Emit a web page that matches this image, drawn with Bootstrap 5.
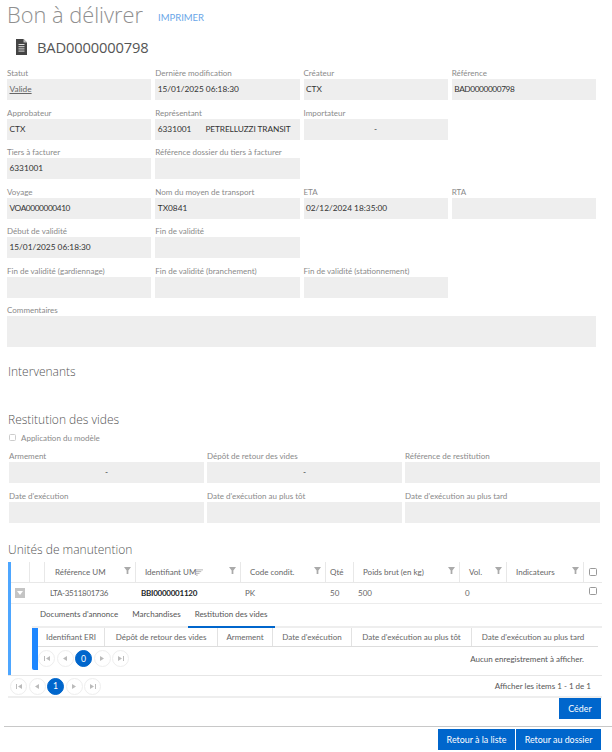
<!DOCTYPE html>
<html lang="fr">

<head>
  <meta charset="UTF-8">
  <meta name="viewport" content="width=device-width, initial-scale=1.0">
  <title>Bon à délivrer</title>
  <link href="https://cdn.jsdelivr.net/npm/bootstrap@5.3.5/dist/css/bootstrap.min.css" rel="stylesheet">
  <style>
    html, body { height: 752px; overflow: hidden; }
    body { font-family: Lato, "Liberation Sans", sans-serif; font-size: 8px; color: #444; background: #fff; }
    .page-head { height: 30px; padding-left: 7px; }
    .page-title { font-family: "Open Sans", sans-serif; font-size: 21.8px; font-weight: 300; color: #8f8f8f; line-height: 30px; margin: 0; width: 151px; }
    .print-link { font-size: 9.5px; color: #6aa6e8; text-decoration: none; margin-top: 7px; }
    .doc-head { height: 37px; padding: 0 0 3px 16px; }
    .doc-num { font-family: "Open Sans", sans-serif; font-size: 14.7px; color: #555; margin-left: 10px; letter-spacing: -0.15px; }
    .fields { padding: 0 16px 0 7px; }
    .fields > .row { --bs-gutter-x: 4px; --bs-gutter-y: 0; }
    .field { height: 39.5px; }
    .field-label { display: block; height: 12px; line-height: 13px; color: #8a8a8a; white-space: nowrap; margin: 0; }
    .field-box { height: 21px; line-height: 21px; background: #eee; padding: 0 2.5px; font-size: 8.3px; color: #333; white-space: nowrap; overflow: hidden; }
    .field-box.dash { text-align: center; }
    .field-box u { color: #666; }
    .code-val { letter-spacing: -0.4px; }
    .party-name { margin-left: 14px; letter-spacing: -0.1px; }
    .comment-box { height: 31px; }
    .comment-field { height: 43px; }
    .sec-title { font-family: "Open Sans", sans-serif; font-size: 12px; font-weight: 300; color: #555; margin: 0; padding-left: 8px; line-height: 17px; }
    .sec-one { margin-top: 16px; }
    .sec-two { margin-top: 31px; }
    .sec-three { margin-top: 12px; }
    .model-line { height: 19px; padding-left: 9px; color: #8a8a8a; gap: 5px; margin-bottom: 3px; }
    .fake-check { display: inline-block; width: 8px; height: 8px; border: 1px solid #999; border-radius: 1.5px; background: #fff; }
    .model-line .fake-check { width: 7px; height: 7px; border-color: #ccc; }
    .fields-three { padding: 0 12px 0 9px; }
    .fields-three > .row { --bs-gutter-x: 3px; --bs-gutter-y: 0; }
    .um-wrap { margin-left: 8px; margin-right: 10px; margin-top: 4px; }
    .um-table { display: block; border-left: 3px solid #4da6ff; }
    .grid-line { display: flex; align-items: center; }
    .grid-cell { flex: none; height: 100%; display: flex; align-items: center; white-space: nowrap; position: relative; color: #666; }
    .um-head { height: 21px; border-bottom: 1.5px solid #e8e8e8; }
    .um-head .grid-cell { border-right: 1.5px solid #e8e8e8; }
    .um-row { height: 21px; border-bottom: 1.5px solid #ececec; }
    .w-a { width: 19px; } .w-b { width: 15px; } .w-c { width: 91px; padding-left: 10px; }
    .w-d { width: 105px; padding-left: 9px; } .w-e { width: 85px; padding-left: 9px; }
    .w-f { width: 28px; padding-left: 4px; } .w-g { width: 106px; padding-left: 9px; }
    .w-h { width: 47px; padding-left: 9px; } .w-i { width: 77px; padding-left: 9px; } .w-j { width: 18px; justify-content: center; }
    .um-row .w-c, .um-row .w-d { padding-left: 5px; }
    .um-row .w-e { padding-left: 4px; }
    .um-row .w-g { padding-left: 4px; }
    .um-row .w-h { padding-left: 5px; }
    .um-row .w-c { letter-spacing: -0.3px; }
    .um-row .w-d { letter-spacing: -0.25px; }
    .filter-icon { position: absolute; right: 4px; top: 5px; width: 7px; height: 7px; }
    .sort-icon { width: 7px; height: 7px; margin-left: 0; }
    .expand-btn { width: 10px; height: 10px; background: #c4c4c4; margin-left: 4px; display: flex; align-items: center; justify-content: center; }
    .detail { padding-left: 21px; }
    .tab-line { height: 24px; padding-left: 6px; gap: 10px; color: #555; border-bottom: 2px solid #eee; }
    .tab-item { height: 24px; line-height: 21px; padding: 0 2px; }
    .tab-item.on { border-bottom: 2.5px solid #0066cc; padding: 0 7px; margin-left: -5px; }
    .sub-table { border-left: 6px solid #1e87ff; border-radius: 0 0 0 2px; margin-right: 4px; }
    .sub-head { height: 19px; border-bottom: 1px solid #ddd; }
    .sub-head .grid-cell { justify-content: center; border-right: 1px solid #e2e2e2; }
    .sub-head .grid-cell:last-child { border-right: 0; }
    .s-a { width: 67px; } .s-b { width: 113px; } .s-c { width: 55px; } .s-d { width: 79px; } .s-e { width: 120px; } .s-f { width: 122px; }
    .circle-btn { width: 17px; height: 17px; border: 1px solid #eee; border-radius: 50%; display: flex; align-items: center; justify-content: center; background: #fff; flex: none; }
    .circle-btn.on { background: #0066cc; border-color: #0066cc; color: #fff; font-size: 8.7px; }
    .sub-pager { padding-right: 14px; height: 23px; gap: 1.5px; }
    .pager-info { color: #555; }
    .main-pager { height: 23px; padding: 0 11px 0 2px; gap: 1.5px; border-top: 1.5px solid #e6e6e6; border-bottom: 2px solid #eee; margin-left: 0; }
    .action-btn { background: #0066cc; color: #fff; border: 0; border-radius: 0; font-size: 8.9px; height: 21px; padding: 0; line-height: 21px; }
    .assign-btn { width: 42px; }
    .assign-line { height: 28px; padding: 0 11px 0 0; }
    .bottom-rule { border-top: 1.5px solid #c8c8c8; margin: 0 0 0 4px; opacity: 1; }
    .bottom-bar { padding: 2px 11px 0 0; gap: 1px; }
    .back-a { width: 77px; } .back-b { width: 85px; }
    .um-gap { height: 5px; }
  </style>
</head>
<body>
  <div class="page-head d-flex align-items-center">
    <h1 class="page-title">Bon à délivrer</h1>
    <a href="#" class="print-link">IMPRIMER</a>
  </div>

  <!-- Document number -->
  <div class="doc-head d-flex align-items-center">
    <svg width="11" height="16" viewBox="0 0 11 16">
      <path d="M0 0h7.500l3.500 3.500V16H0z" fill="#444"/>
      <path d="M2.500 5.500h6M2.500 7.700h6M2.500 9.900h6M2.500 12.100h6" stroke="#ddd" stroke-width="1"/>
      <path d="M7.500 0v3.500H11" fill="#bbb"/>
    </svg>
    <span class="doc-num">BAD0000000798</span>
  </div>

  <div class="fields">
    <div class="row">
      <div class="col-3 field"><label class="field-label">Statut</label><div class="field-box"><u>Valide</u></div></div>
      <div class="col-3 field"><label class="field-label">Dernière modification</label><div class="field-box">15/01/2025 06:18:30</div></div>
      <div class="col-3 field"><label class="field-label">Créateur</label><div class="field-box">CTX</div></div>
      <div class="col-3 field"><label class="field-label">Référence</label><div class="field-box code-val">BAD0000000798</div></div>

      <div class="col-3 field"><label class="field-label">Approbateur</label><div class="field-box">CTX</div></div>
      <div class="col-3 field"><label class="field-label">Représentant</label><div class="field-box">6331001<span class="party-name">PETRELLUZZI TRANSIT</span></div></div>
      <div class="col-3 field"><label class="field-label">Importateur</label><div class="field-box dash">-</div></div>
      <div class="col-3 field"></div>

      <div class="col-3 field"><label class="field-label">Tiers à facturer</label><div class="field-box">6331001</div></div>
      <div class="col-3 field"><label class="field-label">Référence dossier du tiers à facturer</label><div class="field-box"></div></div>
      <div class="col-6 field"></div>

      <div class="col-3 field"><label class="field-label">Voyage</label><div class="field-box code-val">VOA0000000410</div></div>
      <div class="col-3 field"><label class="field-label">Nom du moyen de transport</label><div class="field-box">TX0841</div></div>
      <div class="col-3 field"><label class="field-label">ETA</label><div class="field-box">02/12/2024 18:35:00</div></div>
      <div class="col-3 field"><label class="field-label">RTA</label><div class="field-box"></div></div>

      <div class="col-3 field"><label class="field-label">Début de validité</label><div class="field-box">15/01/2025 06:18:30</div></div>
      <div class="col-3 field"><label class="field-label">Fin de validité</label><div class="field-box"></div></div>
      <div class="col-6 field"></div>

      <div class="col-3 field"><label class="field-label">Fin de validité (gardiennage)</label><div class="field-box"></div></div>
      <div class="col-3 field"><label class="field-label">Fin de validité (branchement)</label><div class="field-box"></div></div>
      <div class="col-3 field"><label class="field-label">Fin de validité (stationnement)</label><div class="field-box"></div></div>
      <div class="col-3 field"></div>

      <div class="col-12 comment-field"><label class="field-label">Commentaires</label><div class="field-box comment-box"></div></div>
    </div>
  </div>

  <h2 class="sec-title sec-one">Intervenants</h2>
  <h2 class="sec-title sec-two">Restitution des vides</h2>

  <div class="model-line d-flex align-items-center"><span class="fake-check"></span>Application du modèle</div>

  <div class="fields-three">
    <div class="row">
      <div class="col-4 field"><label class="field-label">Armement</label><div class="field-box dash">-</div></div>
      <div class="col-4 field"><label class="field-label">Dépôt de retour des vides</label><div class="field-box dash">-</div></div>
      <div class="col-4 field"><label class="field-label">Référence de restitution</label><div class="field-box"></div></div>
      <div class="col-4 field"><label class="field-label">Date d'exécution</label><div class="field-box"></div></div>
      <div class="col-4 field"><label class="field-label">Date d'exécution au plus tôt</label><div class="field-box"></div></div>
      <div class="col-4 field"><label class="field-label">Date d'exécution au plus tard</label><div class="field-box"></div></div>
    </div>
  </div>

  <h2 class="sec-title sec-three">Unités de manutention</h2>

  <div class="um-wrap">
    <div class="um-table">
      <div class="grid-line um-head">
        <div class="grid-cell w-a"></div>
        <div class="grid-cell w-b"></div>
        <div class="grid-cell w-c">Référence UM<svg class="filter-icon" viewBox="0 0 8 8"><path d="M0 0h8L5 4v4H3V4z" fill="#aaa"/></svg></div>
        <div class="grid-cell w-d">Identifiant UM<svg class="sort-icon" viewBox="0 0 8 8"><path d="M0 1h8M0 3h6M0 5h4M0 7h2" stroke="#aaa" stroke-width="1"/></svg><svg class="filter-icon" viewBox="0 0 8 8"><path d="M0 0h8L5 4v4H3V4z" fill="#aaa"/></svg></div>
        <div class="grid-cell w-e">Code condit.<svg class="filter-icon" viewBox="0 0 8 8"><path d="M0 0h8L5 4v4H3V4z" fill="#aaa"/></svg></div>
        <div class="grid-cell w-f">Qté</div>
        <div class="grid-cell w-g">Poids brut (en kg)<svg class="filter-icon" viewBox="0 0 8 8"><path d="M0 0h8L5 4v4H3V4z" fill="#aaa"/></svg></div>
        <div class="grid-cell w-h">Vol.<svg class="filter-icon" viewBox="0 0 8 8"><path d="M0 0h8L5 4v4H3V4z" fill="#aaa"/></svg></div>
        <div class="grid-cell w-i">Indicateurs<svg class="filter-icon" viewBox="0 0 8 8"><path d="M0 0h8L5 4v4H3V4z" fill="#aaa"/></svg></div>
        <div class="grid-cell w-j border-0"><span class="fake-check"></span></div>
      </div>
      <div class="grid-line um-row">
        <div class="grid-cell w-a"><span class="expand-btn"><svg width="6" height="4" viewBox="0 0 6 4"><path d="M0 0h6L3 4z" fill="#fff"/></svg></span></div>
        <div class="grid-cell w-b"></div>
        <div class="grid-cell w-c">LTA-3511801736</div>
        <div class="grid-cell w-d fw-bold text-dark">BBI0000001120</div>
        <div class="grid-cell w-e">PK</div>
        <div class="grid-cell w-f">50</div>
        <div class="grid-cell w-g">500</div>
        <div class="grid-cell w-h">0</div>
        <div class="grid-cell w-i"></div>
        <div class="grid-cell w-j align-items-start pt-1"><span class="fake-check"></span></div>
      </div>
      <div class="detail">
        <div class="tab-line d-flex">
          <span class="tab-item">Documents d'annonce</span>
          <span class="tab-item">Marchandises</span>
          <span class="tab-item on">Restitution des vides</span>
        </div>
        <div class="sub-table">
          <div class="grid-line sub-head">
            <div class="grid-cell s-a">Identifiant ERI</div>
            <div class="grid-cell s-b">Dépôt de retour des vides</div>
            <div class="grid-cell s-c">Armement</div>
            <div class="grid-cell s-d">Date d'exécution</div>
            <div class="grid-cell s-e">Date d'exécution au plus tôt</div>
            <div class="grid-cell s-f">Date d'exécution au plus tard</div>
          </div>
          <div class="grid-line sub-pager">
            <span class="circle-btn"><svg width="6" height="5" viewBox="0 0 6 5"><path d="M0 0h1v5H0zM6 0v5L2 2.500z" fill="#bbb"/></svg></span>
            <span class="circle-btn"><svg width="4" height="5" viewBox="0 0 4 5"><path d="M4 0v5L0 2.500z" fill="#bbb"/></svg></span>
            <span class="circle-btn on">0</span>
            <span class="circle-btn"><svg width="4" height="5" viewBox="0 0 4 5"><path d="M0 0v5l4-2.500z" fill="#bbb"/></svg></span>
            <span class="circle-btn"><svg width="6" height="5" viewBox="0 0 6 5"><path d="M0 0v5l4-2.500zM5 0h1v5H5z" fill="#bbb"/></svg></span>
            <span class="pager-info ms-auto">Aucun enregistrement à afficher.</span>
          </div>
        </div>
      </div>
      <div class="um-gap"></div>
    </div>
    <div class="grid-line main-pager">
      <span class="circle-btn"><svg width="6" height="5" viewBox="0 0 6 5"><path d="M0 0h1v5H0zM6 0v5L2 2.500z" fill="#bbb"/></svg></span>
      <span class="circle-btn"><svg width="4" height="5" viewBox="0 0 4 5"><path d="M4 0v5L0 2.500z" fill="#bbb"/></svg></span>
      <span class="circle-btn on">1</span>
      <span class="circle-btn"><svg width="4" height="5" viewBox="0 0 4 5"><path d="M0 0v5l4-2.500z" fill="#bbb"/></svg></span>
      <span class="circle-btn"><svg width="6" height="5" viewBox="0 0 6 5"><path d="M0 0v5l4-2.500zM5 0h1v5H5z" fill="#bbb"/></svg></span>
      <span class="pager-info ms-auto">Afficher les items 1 - 1 de 1</span>
    </div>
  </div>

  <div class="assign-line d-flex justify-content-end">
    <button class="btn action-btn assign-btn">Céder</button>
  </div>
  <hr class="bottom-rule my-0">
  <div class="bottom-bar d-flex justify-content-end">
    <button class="btn action-btn back-a">Retour à la liste</button>
    <button class="btn action-btn back-b">Retour au dossier</button>
  </div>
</body>

</html>
